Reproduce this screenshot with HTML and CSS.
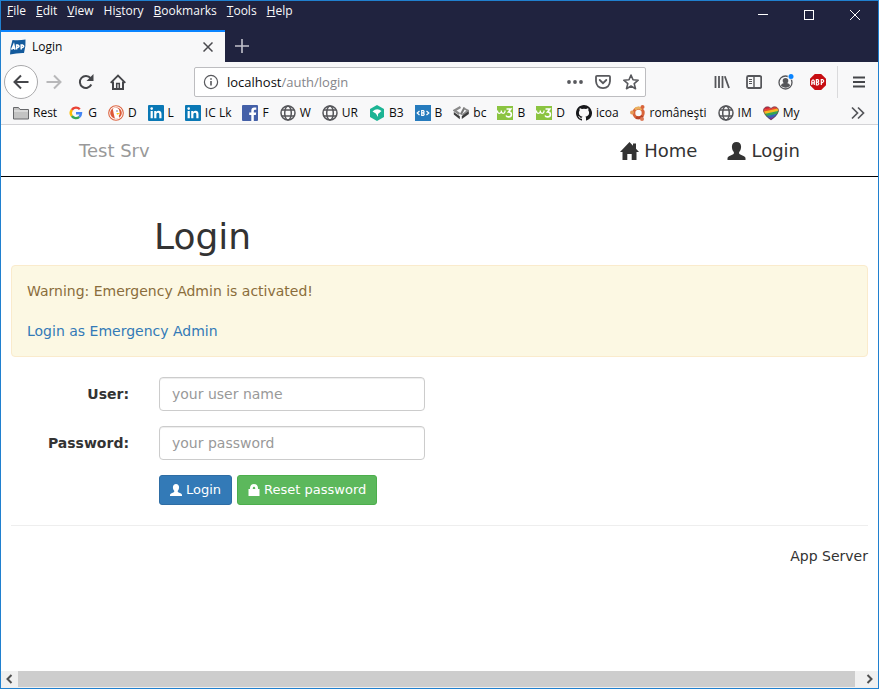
FILE: index.html
```html
<!DOCTYPE html>
<html lang="en">
<head>
<meta charset="utf-8">
<title>Login</title>
<link rel="stylesheet" href="styles.css">
</head>
<body>
<svg class="sprite" aria-hidden="true">
  <symbol id="globe" viewBox="0 0 16 16"><g fill="none" stroke="#55565a" stroke-width="1.5"><circle cx="8" cy="8" r="7"/><ellipse cx="8" cy="8" rx="3.3" ry="7"/><path d="M2 5h12M2 11h12"/></g></symbol>
  <symbol id="linkedin" viewBox="0 0 16 16"><rect width="16" height="16" rx="1" fill="#0a78b5"/><g fill="#fff"><circle cx="3.7" cy="3.6" r="1.3"/><path d="M2.6 6h2.2v7.3H2.6zM6.2 6h2.1v1c.5-.8 1.300-1.200 2.300-1.200 2.200 0 2.900 1.400 2.900 3.500v4h-2.200V9.700c0-1.100-.2-1.900-1.300-1.900-1.200 0-1.600.8-1.600 1.900v3.600H6.200z"/></g></symbol>
  <symbol id="w3" viewBox="0 0 16 16"><rect y="1" width="16" height="14" fill="#8bc441"/><path d="M.5 5.500v1q0 1.800 1.800 1.800T4.300 6.500V5.500M4.300 6.500q0 1.800 1.800 1.800T8 6.500V5.500" fill="none" stroke="#fff" stroke-width="1.300"/><path d="M9.500 4h4.300l-2.300 3q2.900 0 2.900 2.400 0 2.500-2.900 2.500-1.900 0-2.400-1.500" fill="none" stroke="#fff" stroke-width="1.600"/></symbol>
  <symbol id="user" viewBox="0 0 18 18"><path fill="currentColor" d="M9 0c2.900 0 4.600 2 4.600 4.800 0 1.800-.6 3.800-1.700 5-.6.8-.5 2 .4 2.500l4.200 1.900c1 .5 1.500 1.300 1.500 2.200V18H0v-1.600c0-.9.5-1.700 1.500-2.200l4.200-1.900c.9-.5 1-1.700.4-2.500-1.100-1.200-1.700-3.200-1.700-5C4.400 2 6.100 0 9 0z"/></symbol>
</svg>

<div class="window">
  <header class="titlebar">
    <div class="menu-row">
      <nav class="menus" aria-label="Menu bar">
        <button><u>F</u>ile</button><button><u>E</u>dit</button><button><u>V</u>iew</button><button>Hi<u>s</u>tory</button><button><u>B</u>ookmarks</button><button><u>T</u>ools</button><button><u>H</u>elp</button>
      </nav>
      <div class="window-controls">
        <button aria-label="Minimize"><svg width="10" height="10"><path d="M0 4.500h10" stroke="#fff"/></svg></button>
        <button aria-label="Maximize"><svg width="10" height="10"><rect x=".5" y=".5" width="9" height="9" fill="none" stroke="#fff"/></svg></button>
        <button aria-label="Close"><svg width="10" height="10"><path d="M0 0l10 10M10 0L0 10" stroke="#fff"/></svg></button>
      </div>
    </div>
    <div class="tabs">
      <div class="tab">
        <svg width="16" height="16" viewBox="0 0 16 16"><path d="M2.500 1Q9 1.800 15.500.5q.5 7-1.500 13.500Q7 13.800 0 15.500q.2-8 2.500-14.500z" fill="#135a9c"/><path d="M1.600 10.600L3.800 5.600l1.100 5M2.400 9.200h2.300M6.600 10.600V6h1.100q2.700 1.300 0 2.600H6.600M11.200 10.600V6h1.200q2.600 1.300 0 2.600h-1.200" fill="none" stroke="#fff" stroke-width="1.500"/></svg>
        <span class="tab-title">Login</span>
        <button aria-label="Close tab"><svg width="10" height="10"><path d="M.5.5l9 9M9.500.5l-9 9" stroke="#4a4a4f" stroke-width="1.500"/></svg></button>
      </div>
      <button class="new-tab" aria-label="New tab"><svg width="14" height="14"><path d="M7 0v14M0 7h14" stroke="#c2c2cc" stroke-width="1.600"/></svg></button>
    </div>
  </header>

  <div class="toolbar">
    <button class="back" aria-label="Back"><svg width="16" height="16" fill="none" stroke="#45464a" stroke-width="2"><path d="M15.500 8H2M8 1.500L1.500 8 8 14.500"/></svg></button>
    <button aria-label="Forward"><svg width="16" height="16" fill="none" stroke="#b8b8ba" stroke-width="2"><path d="M.5 8H14M8 1.500L14.500 8 8 14.500"/></svg></button>
    <button aria-label="Reload"><svg width="16" height="16"><path d="M13.300 10.500A6 6 0 1 1 12.600 4.200" fill="none" stroke="#45464a" stroke-width="2"/><path d="M15.500 0v7h-7z" fill="#45464a"/></svg></button>
    <button aria-label="Home"><svg width="16" height="16" fill="none" stroke="#45464a"><path d="M.7 8.800L8 1.500l7.300 7.300" stroke-width="1.800"/><path d="M3 7.500V15h10V7.500" stroke-width="2"/><path d="M6.700 14.500V9.500h2.600v5" stroke-width="1.500"/></svg></button>
    <div class="address">
      <svg width="16" height="16"><circle cx="8" cy="8" r="6.600" fill="none" stroke="#58595d" stroke-width="1.200"/><path d="M7.200 7h1.600v4.500H7.200zM7.200 4.200h1.600v1.600H7.200z" fill="#58595d"/></svg>
      <a class="url" href="#">localhost<span>/auth/login</span></a>
      <button aria-label="Page actions"><svg width="16" height="16" fill="#58595d"><circle cx="2" cy="8" r="1.900"/><circle cx="8" cy="8" r="1.900"/><circle cx="14" cy="8" r="1.900"/></svg></button>
      <button aria-label="Save to Pocket"><svg width="16" height="16" fill="none" stroke="#58595d" stroke-width="1.800"><path d="M2 1.800h12q1 0 1 1v4.400q-.5 6.500-7 7-6.500-.5-7-7V2.800q0-1 1-1z"/><path d="M4.700 6L8 9.200 11.300 6" stroke-linecap="round"/></svg></button>
      <button aria-label="Bookmark this page"><svg width="16" height="16" fill="none" stroke="#58595d" stroke-width="1.600" stroke-linejoin="round"><path d="M8 1l2 4.800 5.200.4-4 3.400 1.300 5.100L8 12l-4.500 2.700 1.300-5.100-4-3.400L6 5.800z"/></svg></button>
    </div>
    <button aria-label="Library"><svg width="16" height="16" stroke="#55565a" stroke-width="1.800"><path d="M1.500 2v12M5 2v12M8.500 2v12M10.800 2.300L15 14"/></svg></button>
    <button aria-label="Sidebars"><svg width="16" height="16" fill="none" stroke="#55565a"><rect x="1" y="2" width="14.200" height="12" rx="1.500" stroke-width="1.800"/><path d="M8 2v12" stroke-width="1.400"/><path d="M3 5.500h3M3 7.500h3M3 9.500h3"/></svg></button>
    <button aria-label="Account"><svg width="18" height="16"><circle cx="8.500" cy="8.500" r="6.500" fill="none" stroke="#55565a" stroke-width="1.300"/><circle cx="8.500" cy="6.800" r="2.800" fill="#55565a"/><path d="M4 12q0-2.500 3-3h3q3 .5 3 3-4 3.500-9 0z" fill="#55565a"/><circle cx="14" cy="2.500" r="3.300" fill="#f8f8f9"/><circle cx="14" cy="2.500" r="2.500" fill="#0a84ff"/></svg></button>
    <button aria-label="Ad blocker"><svg width="16" height="16"><path d="M4.800 0h6.400L16 4.800v6.400L11.200 16H4.800L0 11.200V4.800z" fill="#c70d12"/><path d="M1.800 11V7q1.300-2.400 2.500 0v4M1.800 8.800h2.500M6.400 11V5.600h1.300q1.900 1.300 0 2.600 2.200 1.400 0 2.800zM6.400 8.200h1.400M11.300 11V5.600h1.200q2.500 1.500 0 3h-1.200" fill="none" stroke="#fff" stroke-width="1.200"/></svg></button>
    <span class="separator"></span>
    <button aria-label="Open menu"><svg width="16" height="16" stroke="#45464a" stroke-width="1.800"><path d="M2 3.500h12M2 8h12M2 12.500h12"/></svg></button>
  </div>

  <nav class="bookmarks" aria-label="Bookmarks">
    <a href="#"><svg viewBox="0 0 16 16"><path d="M.5 2.500h5l1.500 2h8.500v9.500H.5z" fill="#c3c3c3" stroke="#66676a"/><path d="M1 6h14" stroke="#eee"/></svg>Rest</a>
    <a href="#"><svg viewBox="0 0 16 16" fill="none" stroke-width="2.400"><path d="M3.800 5A5 5 0 0 1 11.800 4.300" stroke="#ea4335"/><path d="M3.800 5a5 5 0 0 0 0 6" stroke="#fbbc05"/><path d="M3.800 11a5 5 0 0 0 7.500.8" stroke="#34a853"/><path d="M11.300 11.800A5 5 0 0 0 13 8.200H8" stroke="#4285f4"/></svg>G</a>
    <a href="#"><svg viewBox="0 0 16 16"><circle cx="8" cy="8" r="7.300" fill="#fff" stroke="#dc6542" stroke-width="1.100"/><circle cx="8" cy="8" r="5.800" fill="#dc5938"/><path d="M4.800 4q1.500-2 4-1.200 2.500.7 2.700 3.700l.3 2.500-1 1.500.3 2.600q-2.500 1-4.200.5L5.800 9z" fill="#fff"/><path d="M8.500 8l4 .2-3.500 1.600z" fill="#fdc500"/><circle cx="9" cy="6" r=".7" fill="#355b88"/></svg>D</a>
    <a href="#"><svg><use href="#linkedin"/></svg>L</a>
    <a href="#"><svg><use href="#linkedin"/></svg>IC Lk</a>
    <a href="#"><svg viewBox="0 0 16 16"><rect width="16" height="16" rx="1" fill="#4460a8"/><path d="M9.300 16V10H7.200V7.500h2.100V5.700q0-3.300 3-3.300h2v2.300H13q-1.200 0-1.200 1.200v1.600h2.400l-.4 2.500h-2v6z" fill="#fff"/></svg>F</a>
    <a href="#"><svg><use href="#globe"/></svg>W</a>
    <a href="#"><svg><use href="#globe"/></svg>UR</a>
    <a href="#"><svg viewBox="0 0 16 16"><path d="M8 0l7 4v8l-7 4-7-4V4z" fill="#1cb494"/><path d="M3.500 6.500Q8 2.500 12.500 6L9 9v3L6.800 8.500z" fill="#fff"/></svg>B3</a>
    <a href="#"><svg viewBox="0 0 16 16"><rect width="16" height="16" fill="#267bbd"/><path d="M4.500 6L2.200 8l2.300 2M11.500 6l2.300 2-2.300 2M6.700 5.500h1.500q1.800 1.200 0 2.400 2 1.200 0 2.500H6.700zM6.700 7.900h1.500" fill="none" stroke="#fff" stroke-width="1.200"/></svg>B</a>
    <a href="#"><svg viewBox="0 0 16 16" fill="none"><path d="M7.500 2L1.500 5.500l5 3.500" stroke="#8a8a8a" stroke-width="2.200"/><path d="M.8 7l6 4.200v3L.8 9.500z" fill="#3c3c3c"/><path d="M11.500 2.500L7.800 9.500" stroke="#777" stroke-width="2"/><path d="M11 3.500l4 2-5.500 4.500" stroke="#8a8a8a" stroke-width="1.800"/><path d="M15.800 6v3l-7 5v-3z" fill="#3c3c3c"/></svg>bc</a>
    <a href="#"><svg><use href="#w3"/></svg>B</a>
    <a href="#"><svg><use href="#w3"/></svg>D</a>
    <a href="#"><svg viewBox="0 0 16 16"><path fill="#17181b" d="M8 0C3.600 0 0 3.600 0 8c0 3.500 2.300 6.500 5.500 7.600.4.100.5-.2.500-.4v-1.500c-2.200.5-2.700-.9-2.700-.9-.4-.9-.9-1.200-.9-1.200-.7-.5.100-.5.100-.5.800.1 1.200.8 1.200.8.700 1.200 1.900.9 2.300.7.100-.5.300-.9.500-1.100-1.800-.2-3.600-.9-3.600-4 0-.9.300-1.600.8-2.100-.1-.2-.4-1 .1-2.100 0 0 .7-.2 2.200.8a7.500 7.500 0 0 1 4 0c1.500-1 2.200-.8 2.200-.8.400 1.100.2 1.900.1 2.100.5.600.8 1.300.8 2.100 0 3.100-1.900 3.800-3.700 4 .3.300.6.800.6 1.500v2.200c0 .2.100.5.500.4A8 8 0 0 0 8 0z"/></svg>icoa</a>
    <a href="#"><svg viewBox="0 0 16 16" fill="none"><circle cx="8.500" cy="8" r="4.700" stroke="#d8643b" stroke-width="3"/><path d="M5 4.500a5 5 0 0 1 7-.2" stroke="#eab05f" stroke-width="3"/><path d="M12.500 10.800a5 5 0 0 1-6.500 1.400" stroke="#b84428" stroke-width="3"/><circle cx="2" cy="7.500" r="2" fill="#e69a58"/><circle cx="12.500" cy="2" r="2" fill="#d8643b"/><circle cx="12" cy="14" r="2" fill="#dc7958"/></svg>româneşti</a>
    <a href="#"><svg><use href="#globe"/></svg>IM</a>
    <a href="#"><svg viewBox="0 0 16 16"><clipPath id="heart"><path d="M8 15Q1.500 10.500.6 6.500C-.2 2 5 .2 8 3.500c3-3.300 8.200-1.500 7.400 3Q14.500 10.500 8 15z"/></clipPath><g clip-path="url(#heart)" stroke-width="2.800"><path d="M-1 4L17 0" stroke="#cf263e"/><path d="M-1 6.500l18-4" stroke="#e94630"/><path d="M-1 8.500l18-4" stroke="#f4bb24"/><path d="M-1 11l18-4" stroke="#34a650"/><path d="M-1 13.500l18-4" stroke="#3466b7"/><path d="M-1 16l18-4" stroke="#783092"/></g><path d="M8 15Q1.500 10.500.6 6.500C-.2 2 5 .2 8 3.500c3-3.300 8.200-1.500 7.400 3Q14.500 10.500 8 15z" fill="none" stroke="#603a46" stroke-width=".7"/></svg>My</a>
    <button aria-label="More bookmarks"><svg viewBox="0 0 16 16" fill="none" stroke="#55565a" stroke-width="1.700"><path d="M2 2.500L7.500 8 2 13.500M8 2.500L13.500 8 8 13.500"/></svg></button>
  </nav>

  <div class="page">
    <nav class="navbar">
      <a class="brand" href="#">Test Srv</a>
      <a href="#"><svg width="19" height="18" viewBox="0 0 19 18"><path fill="currentColor" d="M9.500 0l3.500 3.700V1.500h3v5.300l3 3.200H16.500v8H11.700v-6H7.300v6H2.500v-8H0z"/></svg>Home</a>
      <a href="#"><svg width="19" height="18"><use href="#user"/></svg>Login</a>
    </nav>
    <main>
      <h1>Login</h1>
      <div class="alert" role="alert">
        <p>Warning: Emergency Admin is activated!</p>
        <a href="#">Login as Emergency Admin</a>
      </div>
      <form>
        <label for="user-name">User:</label>
        <input id="user-name" type="text" placeholder="your user name">
        <label for="password">Password:</label>
        <input id="password" type="password" placeholder="your password">
        <div class="actions">
          <button type="button" class="primary"><svg width="12" height="12"><use href="#user"/></svg>Login</button>
          <button type="button" class="success"><svg width="12" height="12"><path d="M.5 5H2V4Q2.300 0 6 0t4 4v1h1.500v7H.5zM4.800 5h2.400V4Q7 2.800 6 2.800T4.800 4z" fill="currentColor" fill-rule="evenodd"/></svg>Reset password</button>
        </div>
      </form>
      <footer>App Server</footer>
    </main>
  </div>

  <div class="scrollbar" aria-hidden="true">
    <svg width="17" height="16" viewBox="0 0 17 16"><path d="M10.500 4L6.500 8l4 4" fill="none" stroke="#505050" stroke-width="2"/></svg>
    <span class="thumb"></span>
    <svg width="23" height="16" viewBox="0 0 23 16"><path d="M12.500 4l4 4-4 4" fill="none" stroke="#505050" stroke-width="2"/></svg>
  </div>
</div>
</body>
</html>
```
FILE: styles.css
```css
* {
  box-sizing: border-box;
}

body {
  margin: 0;
  font: 14px/20px "DejaVu Sans", Verdana, sans-serif;
  color: #333;
}

button {
  margin: 0;
  padding: 0;
  border: 0;
  background: none;
  font: inherit;
  color: inherit;
}

a {
  color: inherit;
  text-decoration: none;
}

svg {
  flex: none;
}

.sprite {
  position: absolute;
  width: 0;
  height: 0;
}

.window {
  display: flex;
  flex-direction: column;
  min-height: 100vh;
  border: 1px solid #2080cf;
  background: #fff;
}

.titlebar,
.toolbar,
.bookmarks {
  font: 12px/16px "Open Sans", "Segoe UI", sans-serif;
}

.titlebar {
  background: #20233f;
  color: #f9f9fa;
}

.menu-row {
  display: flex;
  justify-content: space-between;
  align-items: flex-start;
  height: 29px;
}

.menus {
  display: flex;
  gap: 10px;
  padding: 2px 6px;
}

.window-controls {
  display: flex;
}

.window-controls button {
  display: flex;
  justify-content: center;
  align-items: center;
  width: 46px;
  height: 28px;
}

.tabs {
  display: flex;
  height: 32px;
}

.tab {
  display: flex;
  align-items: center;
  gap: 6px;
  width: 224px;
  padding: 0 12px 0 9px;
  border-top: 2px solid #0a84ff;
  background: #f8f8f9;
  color: #0c0c0d;
}

.tab-title {
  flex: 1;
}

.tab button,
.new-tab {
  display: flex;
  justify-content: center;
  align-items: center;
}

.new-tab {
  width: 34px;
}

.toolbar {
  display: flex;
  align-items: center;
  height: 40px;
  padding: 0 3px;
  background: #f8f8f9;
}

.toolbar button {
  display: flex;
  justify-content: center;
  align-items: center;
  width: 32px;
  height: 32px;
}

.toolbar .back {
  width: 34px;
  height: 34px;
  border: 1px solid #a9a9ab;
  border-radius: 50%;
  background: #fff;
}

.address {
  display: flex;
  flex: 1;
  align-items: center;
  height: 30px;
  margin: 0 60px;
  padding: 0 0 0 8px;
  border: 1px solid #bdbdc0;
  border-radius: 2px;
  background: #fff;
}

.address button {
  width: 28px;
}

.url {
  flex: 1;
  padding-left: 8px;
  font-size: 13px;
  color: #0c0c0d;
}

.url span {
  color: #85858a;
}

.separator {
  width: 1px;
  height: 32px;
  margin: 0 5px 0 3px;
  background: #dadadc;
}

.bookmarks {
  display: flex;
  align-items: center;
  gap: 11px;
  height: 23px;
  padding: 0 12px;
  border-bottom: 1px solid #d3d3d6;
  background: #f8f8f9;
  color: #0c0c0d;
}

.bookmarks a {
  display: flex;
  align-items: center;
  gap: 4px;
  white-space: nowrap;
}

.bookmarks svg {
  display: block;
  width: 16px;
  height: 16px;
}

.bookmarks button {
  margin-left: auto;
}

.page {
  flex: 1;
}

.navbar {
  display: flex;
  align-items: center;
  gap: 30px;
  height: 52px;
  padding: 0 78px;
  border-bottom: 1px solid #000;
  font-size: 18px;
}

.navbar a {
  display: flex;
  align-items: center;
  gap: 5px;
}

.navbar .brand {
  margin-right: auto;
  color: #999;
}

main {
  padding: 40px 10px 20px;
}

h1 {
  margin: 0 0 8px 143px;
  font-size: 36px;
  font-weight: 400;
  line-height: 40px;
}

.alert {
  margin-bottom: 20px;
  padding: 15px;
  border: 1px solid #faebcc;
  border-radius: 4px;
  background: #fcf8e3;
  color: #8a6d3b;
}

.alert p {
  margin: 0 0 20px;
}

.alert a {
  color: #337ab7;
}

form {
  display: grid;
  grid-template-columns: 118px minmax(0, 266px);
  gap: 15px 30px;
}

label {
  padding-top: 7px;
  font-weight: 700;
  text-align: right;
}

input {
  width: 100%;
  height: 34px;
  padding: 6px 12px;
  border: 1px solid #ccc;
  border-radius: 4px;
  background: #fff;
  box-shadow: inset 0 1px 1px rgba(0, 0, 0, 0.075);
  font: inherit;
  color: #555;
}

input::placeholder {
  color: #999;
  opacity: 1;
}

.actions {
  display: flex;
  grid-column: 2;
  gap: 5px;
}

.actions button {
  display: flex;
  align-items: center;
  gap: 4px;
  height: 30px;
  padding: 0 10px;
  border: 1px solid;
  border-radius: 3px;
  font-size: 13px;
  color: #fff;
}

.actions .primary {
  border-color: #2e6da4;
  background: #337ab7;
}

.actions .success {
  border-color: #4cae4c;
  background: #5cb85c;
}

footer {
  margin-top: 20px;
  padding-top: 20px;
  border-top: 1px solid #eee;
  text-align: right;
}

.scrollbar {
  display: flex;
  height: 17px;
  background: #f0f0f0;
}

.thumb {
  flex: 1;
  height: 16px;
  background: #cdcdcd;
}
```
